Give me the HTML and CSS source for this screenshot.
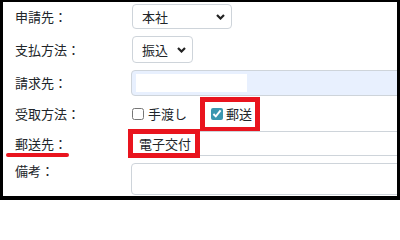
FILE: index.html
```html
<!DOCTYPE html>
<html lang="ja">
<head>
<meta charset="utf-8">
<link rel="stylesheet" href="styles.css">
</head>
<body>
<div class="frame">
  <div class="form">
    <div class="label">申請先：</div>
    <div class="field">
      <div class="select select-wide"><span>本社</span><svg class="chev" width="9" height="6" viewBox="0 0 9 6"><path d="M1 1 L4.5 4.5 L8 1" fill="none" stroke="#222" stroke-width="2.2"/></svg></div>
    </div>

    <div class="label">支払方法：</div>
    <div class="field">
      <div class="select select-narrow"><span>振込</span><svg class="chev" width="9" height="6" viewBox="0 0 9 6"><path d="M1 1 L4.5 4.5 L8 1" fill="none" stroke="#222" stroke-width="2.2"/></svg></div>
    </div>

    <div class="label">請求先：</div>
    <div class="field">
      <div class="input input-fill"><span class="redact"></span></div>
    </div>

    <div class="label">受取方法：</div>
    <div class="field checks">
      <label class="check"><input type="checkbox"><span>手渡し</span></label>
      <label class="check check-marked"><input type="checkbox" checked><span>郵送</span></label>
    </div>

    <div class="label label-marked">郵送先：</div>
    <div class="field">
      <div class="input input-mail">電子交付<span class="mark"></span></div>
    </div>

    <div class="label label-top">備考：</div>
    <div class="field field-top">
      <div class="textarea"></div>
    </div>
  </div>
</div>
</body>
</html>
```

FILE: styles.css
```css
html, body {
  margin: 0;
  padding: 0;
  background: #fff;
}

body {
  font-family: "Noto Sans CJK JP", "Noto Sans", sans-serif;
  font-size: 13px;
  line-height: 20px;
  color: #212529;
}

.frame {
  width: 400px;
  height: 200px;
  box-sizing: border-box;
  border-style: solid;
  border-color: #000;
  border-width: 2px 3px 4px 3px;
  overflow: hidden;
  background: #fff;
}

.form {
  display: grid;
  grid-template-columns: 128px minmax(0, 1fr);
  grid-template-rows: 29px 37px 30px 32px 27px 39px;
}

.label {
  padding-left: 12px;
  display: flex;
  align-items: center;
  white-space: nowrap;
}

.label-marked {
  position: relative;
}

.label-marked::after {
  content: "";
  position: absolute;
  left: 3px;
  top: 23px;
  width: 63px;
  height: 4px;
  border-radius: 2px;
  background: #e9141e;
}

.label-top {
  align-items: flex-start;
  padding-top: 4px;
}

.field {
  display: flex;
  align-items: center;
  min-width: 0;
}

.field-top {
  align-items: flex-start;
}

.select {
  box-sizing: border-box;
  margin-left: 1px;
  display: flex;
  align-items: center;
  justify-content: space-between;
  padding: 0 6px 0 9px;
  border: 1px solid #ced4da;
  border-radius: 4px;
  background: #fff;
}

.select-wide {
  width: 100px;
  height: 25px;
}

.select-narrow {
  width: 61px;
  height: 27px;
}

.chev {
  display: block;
}

.input {
  box-sizing: border-box;
  flex: none;
  width: 300px;
  border: 1px solid #ced4da;
  border-radius: 4px;
}

.input-fill {
  height: 26px;
  background: #e8f0fe;
  display: flex;
  align-items: center;
  padding-left: 4px;
}

.redact {
  display: block;
  width: 111px;
  height: 18px;
  background: #fff;
}

.checks {
  gap: 13px;
}

.check {
  display: flex;
  align-items: center;
  white-space: nowrap;
}

.check input {
  width: 12px;
  height: 12px;
  margin: 0 4px 0 1px;
  accent-color: #3a97b0;
}

.check-marked {
  border: 5px solid #e9141e;
  height: 25px;
  padding: 0 3px 0 6px;
}

.check-marked input {
  margin: 0 3px 0 0;
}

.input-mail {
  position: relative;
  height: 25px;
  padding-left: 7px;
  line-height: 23px;
  background: #fff;
}

.mark {
  position: absolute;
  left: -4px;
  top: -3px;
  width: 72px;
  height: 29px;
  box-sizing: border-box;
  border: 5px solid #e9141e;
}

.textarea {
  box-sizing: border-box;
  flex: none;
  width: 300px;
  height: 32px;
  margin-top: 6px;
  border: 1px solid #ced4da;
  border-radius: 4px;
  background: #fff;
}
```
